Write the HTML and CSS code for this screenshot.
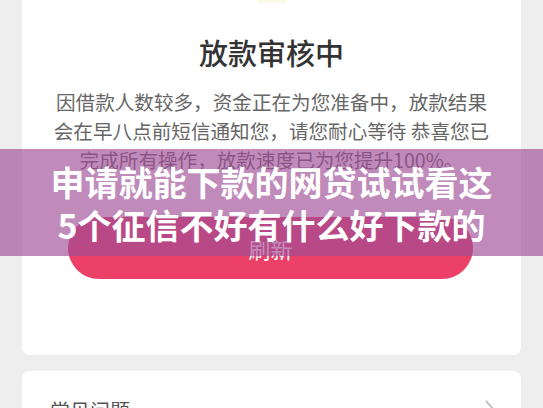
FILE: index.html
```html
<!DOCTYPE html>
<html lang="zh-CN">
<head>
<meta charset="utf-8">
<link rel="stylesheet" href="styles.css">
</head>
<body>
<div class="page">
  <section class="card status">
    <div class="icon-tail"></div>
    <h1 class="title">放款审核中</h1>
    <p class="desc">因借款人数较多，资金正在为您准备中，放款结果<br>会在早八点前短信通知您，请您耐心等待 恭喜您已<br>完成所有操作，放款速度已为您提升100%。</p>
    <button class="refresh">刷新</button>
  </section>
  <section class="card faq">
    <span class="faq-label">常见问题</span>
    <svg class="chev" width="14" height="22" viewBox="0 0 14 22"><path d="M3 2 L11 11 L3 20" fill="none" stroke="#c4c4c4" stroke-width="2"/></svg>
  </section>
</div>
<div class="banner">申请就能下款的网贷试试看这<br>5个征信不好有什么好下款的</div>
</body>
</html>
```
FILE: styles.css
```css
* { box-sizing: border-box; }
html, body { margin: 0; padding: 0; }
body {
  background: #eeeeee;
  font-family: "Noto Sans CJK SC", "Noto Sans", sans-serif;
  width: 543px;
  height: 408px;
  overflow: hidden;
  position: relative;
}
.page {
  padding: 0 22px;
  display: flex;
  flex-direction: column;
  gap: 16px;
}
.card {
  background: #ffffff;
  border-radius: 8px;
}
.status {
  border-radius: 0 0 8px 8px;
  display: flex;
  flex-direction: column;
  align-items: center;
  padding: 0 0 75px;
  height: 355px;
}
.icon-tail {
  width: 30px;
  height: 3px;
  background: #fbf9e8;
  border-radius: 0 0 15px 15px;
}
.title {
  margin: 29px 0 0;
  font-size: 29px;
  line-height: 40px;
  font-weight: 500;
  color: #333333;
}
.desc {
  margin: 15px 0 0;
  font-size: 19.6px;
  line-height: 29px;
  color: #666666;
  text-align: center;
}
.refresh {
  margin-top: 43px;
  width: 405px;
  height: 62px;
  border: none;
  border-radius: 31px;
  background: #ec4068;
  color: #ffffff;
  font-family: inherit;
  font-size: 22px;
  margin-left: -2px;
}
.faq {
  height: 60px;
  display: flex;
  justify-content: space-between;
  align-items: flex-start;
  padding: 28px 24px 0 28px;
}
.faq-label {
  font-size: 20px;
  line-height: 24px;
  color: #555555;
}
.chev { margin-top: 0; }
.banner {
  position: absolute;
  left: 0;
  right: 0;
  top: 149px;
  height: 107px;
  background: rgba(158, 77, 150, 0.65);
  color: #ffffff;
  font-weight: 700;
  font-size: 34px;
  line-height: 43px;
  text-align: center;
  display: flex;
  align-items: center;
  justify-content: center;
}
```
